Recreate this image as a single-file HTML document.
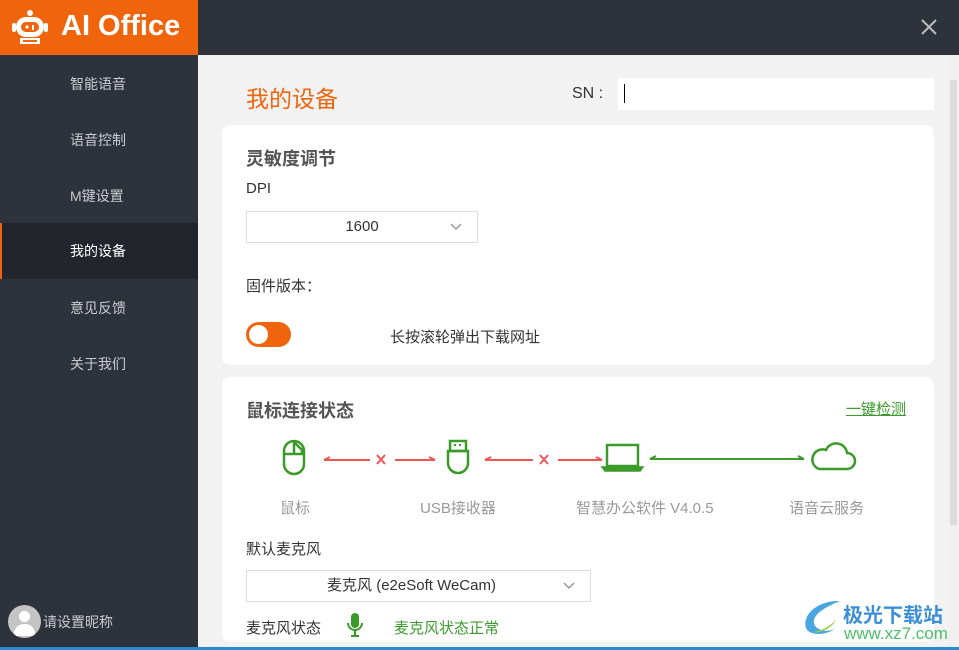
<!DOCTYPE html><html><head><meta charset="utf-8"><style>
*{margin:0;padding:0;box-sizing:border-box}
body{width:959px;height:650px;overflow:hidden;font-family:"Liberation Sans","Noto Sans CJK SC",sans-serif;background:#f2f2f2;position:relative}
.side{position:absolute;left:0;top:0;width:198px;height:650px;background:#2e333b}
.logo{position:absolute;left:0;top:0;width:198px;height:55px;background:#f0650c;color:#fff;font-weight:bold;font-size:29px}
.top{position:absolute;left:198px;top:0;width:761px;height:55px;background:#2e333b}
.mi{position:absolute;left:0;width:198px;height:56px;line-height:56px;color:#c8cbd0;font-size:14px;padding-left:70px}
.act{background:#22262c;border-left:2px solid #f0650c;padding-left:68px;color:#fff}
.card{position:absolute;left:222px;width:712px;background:#fff;border-radius:8px}
.t{position:absolute;font-size:14px;color:#333}
.h{position:absolute;font-size:18px;font-weight:bold;color:#555}
.sel{position:absolute;border:1px solid #ddd;background:#fff;font-size:15px;color:#333;text-align:center}
.sel svg{position:absolute;right:15px;top:11px}
.lb{position:absolute;font-size:15px;color:#999}
</style></head><body>
<div class="side"></div>
<div class="logo">
<svg style="position:absolute;left:10px;top:9px" width="40" height="38" viewBox="0 0 40 38"><circle cx="20" cy="4" r="3" fill="#fff"/><rect x="6" y="8" width="28" height="20" rx="10" fill="#fff"/><rect x="11" y="13" width="18" height="10" rx="5" fill="#f0650c"/><circle cx="17" cy="18" r="1.6" fill="#fff"/><rect x="22" y="16" width="2" height="5" fill="#fff"/><rect x="2" y="14" width="4" height="9" rx="2" fill="#fff"/><rect x="34" y="14" width="4" height="9" rx="2" fill="#fff"/><rect x="10" y="29" width="20" height="6" fill="#fff"/><rect x="13" y="31" width="14" height="2" fill="#f0650c"/></svg>
<span style="position:absolute;left:61px;top:10px">AI Office</span></div>
<div class="top"><svg style="position:absolute;right:22px;top:19px" width="16" height="16" viewBox="0 0 16 16"><path d="M1 1l14 14M15 1L1 15" stroke="#bbb" stroke-width="2"/></svg></div>
<div class="mi" style="top:56px">智能语音</div>
<div class="mi" style="top:112px">语音控制</div>
<div class="mi" style="top:168px">M键设置</div>
<div class="mi act" style="top:223px">我的设备</div>
<div class="mi" style="top:280px">意见反馈</div>
<div class="mi" style="top:336px">关于我们</div>
<div style="position:absolute;left:8px;top:605px;width:33px;height:33px;border-radius:50%;background:#c4c4c4;overflow:hidden"><div style="position:absolute;left:11px;top:6px;width:11px;height:11px;border-radius:50%;background:#fff"></div><div style="position:absolute;left:6px;top:19px;width:21px;height:12px;border-radius:10px 10px 0 0;background:#fff"></div></div>
<div style="position:absolute;left:43px;top:612px;color:#c8cbd0;font-size:14px">请设置昵称</div>
<div style="position:absolute;left:0;top:647px;width:959px;height:3px;background:#2a8bd0"></div>
<div style="position:absolute;left:948px;top:55px;width:11px;height:592px;background:#f0f0f0"></div>
<div style="position:absolute;left:950px;top:80px;width:7px;height:445px;background:#dcdcdc"></div>
<div style="position:absolute;left:246px;top:80px;font-size:23px;color:#f0650c">我的设备</div>
<div class="t" style="left:572px;top:85px;font-size:16px">SN :</div>
<div style="position:absolute;left:618px;top:78px;width:316px;height:32px;background:#fff"><div style="position:absolute;left:6px;top:6px;width:1px;height:19px;background:#000"></div></div>
<div class="card" style="top:125px;height:240px"></div>
<div class="h" style="left:246px;top:145px">灵敏度调节</div>
<div class="t" style="left:246px;top:180px;font-size:15px">DPI</div>
<div class="sel" style="left:246px;top:211px;width:232px;height:32px;line-height:30px">1600<svg width="12" height="8" viewBox="0 0 12 8"><path d="M1 1l5 5 5-5" stroke="#999" stroke-width="1.5" fill="none"/></svg></div>
<div class="t" style="left:246px;top:275px;font-size:15px">固件版本：</div>
<div style="position:absolute;left:246px;top:322px;width:45px;height:25px;border-radius:13px;background:#f0650c"><div style="position:absolute;left:3px;top:3px;width:19px;height:19px;border-radius:50%;background:#fff"></div></div>
<div class="t" style="left:390px;top:326px;font-size:15px">长按滚轮弹出下载网址</div>
<div class="card" style="top:377px;height:265px"></div>
<div class="h" style="left:246px;top:397px">鼠标连接状态</div>
<div style="position:absolute;left:846px;top:398px;font-size:15px;color:#3a9a2a;text-decoration:underline">一键检测</div>
<svg style="position:absolute;left:270px;top:438px" width="590" height="42" viewBox="0 0 590 42">
<g fill="none" stroke="#3a9a2a" stroke-width="2.5"><rect x="14" y="3" width="20" height="33" rx="10"/><path d="M24 4v12M14 16h20"/><path d="M24 4l8 8v4"/>
<path d="M178 13h20v12a10 10 0 0 1-20 0z"/><path d="M180 3h16v10h-16z"/>
<rect x="337" y="7" width="31" height="21"/>
<path d="M549 31h28a8 8 0 0 0 0-16a11 11 0 0 0-21-3a9 9 0 0 0-7 19z"/></g>
<path d="M332 29h41l-3 4h-35z" fill="#3a9a2a" stroke="#3a9a2a" stroke-width="1.5"/>
<rect x="184" y="6" width="2" height="2" fill="#3a9a2a"/><rect x="189" y="6" width="2" height="2" fill="#3a9a2a"/>
<g stroke="#e55" stroke-width="2" fill="none"><path d="M54 22h46M125 22h40M54 22l6-3M165 22l-6-3M215 22h48M288 22h44M215 22l6-3M332 22l-6-3M107 17l8 9M115 17l-8 9M270 17l8 9M278 17l-8 9"/></g>
<g stroke="#3a9a2a" stroke-width="2" fill="none"><path d="M380 21h154M380 21l6-3M534 21l-6-3"/></g>
</svg>
<div class="lb" style="left:280px;top:497px">鼠标</div>
<div class="lb" style="left:420px;top:497px">USB接收器</div>
<div class="lb" style="left:576px;top:497px">智慧办公软件 V4.0.5</div>
<div class="lb" style="left:789px;top:497px">语音云服务</div>
<div class="t" style="left:246px;top:538px;font-size:15px">默认麦克风</div>
<div class="sel" style="left:246px;top:570px;width:345px;height:32px;line-height:30px;padding-right:14px">麦克风 (e2eSoft WeCam)<svg width="12" height="8" viewBox="0 0 12 8"><path d="M1 1l5 5 5-5" stroke="#999" stroke-width="1.5" fill="none"/></svg></div>
<div class="t" style="left:246px;top:617px;font-size:15px">麦克风状态</div>
<svg style="position:absolute;left:345px;top:612px" width="20" height="26" viewBox="0 0 20 26"><rect x="6" y="1" width="8" height="15" rx="4" fill="#3a9a2a"/><path d="M3 11a7 7 0 0 0 14 0M10 18v6M6 24h8" stroke="#3a9a2a" stroke-width="2" fill="none"/></svg>
<div style="position:absolute;left:394px;top:617px;font-size:15px;color:#3a9a2a">麦克风状态正常</div>
<svg style="position:absolute;left:800px;top:598px" width="45" height="40" viewBox="0 0 45 40"><path d="M40 3C20 2 2 15 6 30c3 8 20 8 30 0C28 36 12 32 14 22 16 14 28 8 40 3z" fill="#4aa6e0"/><path d="M36 22c-4 8-16 14-24 12 8 0 18-6 24-12z" fill="#9ad04a"/></svg>
<div style="position:absolute;left:843px;top:599px;font-size:20px;font-weight:bold;color:#3b8fd6">极光下载站</div>
<div style="position:absolute;left:844px;top:624px;font-size:17px;color:#4cbf6a">www.xz7.com</div>
</body></html>
